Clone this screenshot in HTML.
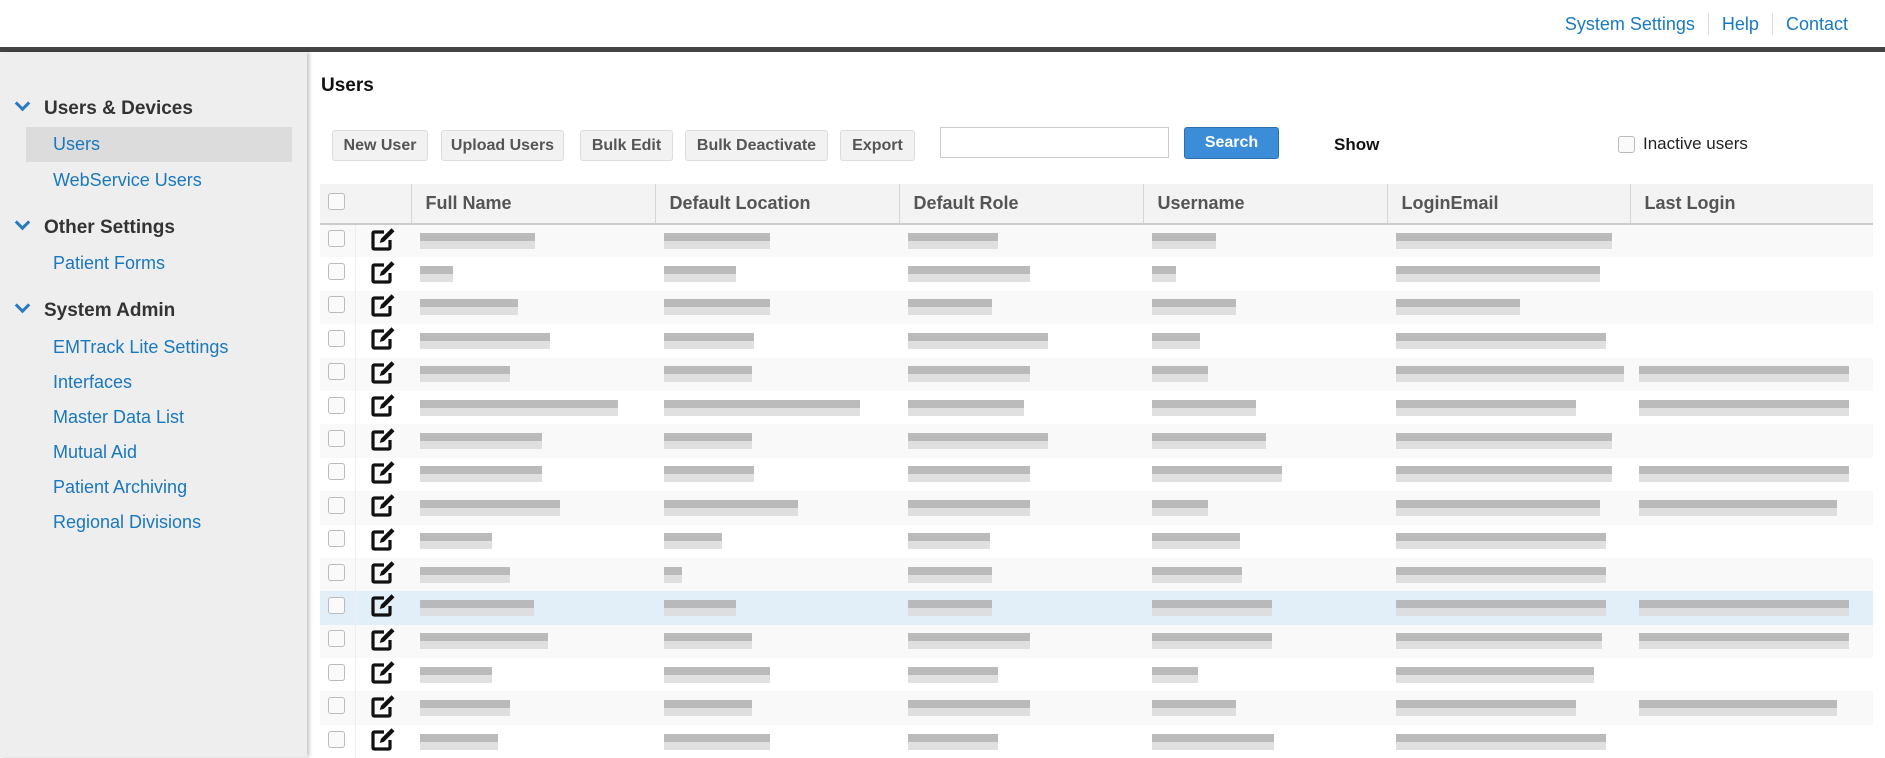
<!DOCTYPE html>
<html><head><meta charset="utf-8"><style>
*{box-sizing:border-box;margin:0;padding:0}
body{width:1885px;height:757px;overflow:hidden;font-family:"Liberation Sans",sans-serif;background:#fff;position:relative}
.top{position:absolute;top:0;left:0;width:1885px;height:48px;background:#fff}
.toplinks{position:absolute;top:13px;right:24px;font-size:18px;color:#1a7ac0;display:flex}
.toplinks span{padding:0 13px;border-left:1px solid #ddd;line-height:22px}
.toplinks span:first-child{border-left:none}
.bar{position:absolute;top:47px;left:0;width:1885px;height:5px;background:#444}
.side{position:absolute;top:52px;left:0;width:307px;height:705px;background:#eee;box-shadow:2px 0 4px rgba(0,0,0,.25)}
.sh{position:absolute;left:44px;font-size:19px;font-weight:bold;color:#333}
.chev{position:absolute;left:17px;width:11px;height:11px;border-right:3px solid #2a7ac0;border-bottom:3px solid #2a7ac0;transform:rotate(45deg)}
.si{position:absolute;left:53px;font-size:18px;color:#1a78bd}
.hl{position:absolute;left:26px;top:75px;width:266px;height:35px;background:#dcdcdc}
h1{position:absolute;left:321px;top:75px;font-size:19px;font-weight:bold;color:#111}
.btn{position:absolute;top:130px;height:31px;background:#f2f2f2;border:1px solid #ddd;border-radius:3px;font-size:16px;font-weight:bold;color:#555;text-align:center;line-height:29px}
.inp{position:absolute;left:940px;top:127px;width:229px;height:31px;border:1px solid #ccc;background:#fff}
.sbtn{position:absolute;left:1184px;top:127px;width:95px;height:32px;background:#3b8dd8;border:1px solid #2a6fb0;border-radius:3px;color:#fff;font-weight:bold;font-size:16px;text-align:center;line-height:30px}
.show{position:absolute;left:1334px;top:135px;font-size:17px;font-weight:bold;color:#111}
.cb{display:inline-block;width:17px;height:17px;border:1px solid #bbb;border-radius:3px;background:#fafafa}
.inact{position:absolute;left:1618px;top:134px;font-size:17px;color:#222;display:flex;align-items:center;gap:8px}
table{position:absolute;left:320px;top:184px;width:1553px;border-collapse:collapse;table-layout:fixed}
th{height:40px;background:#f3f3f3;text-align:left;font-size:18px;color:#555;font-weight:bold;padding-left:14px;border-left:1px solid #d5d5d5;border-bottom:2px solid #ccc}
th.n{border-left:none;padding-left:8px}
td{height:33.4px;padding-left:9px;vertical-align:middle}
td.c{padding-left:8px;border-right:1px solid #eee}
td.e{padding-left:14px}
tr:nth-child(even) td{background:#f9f9f9}
tr.sel td{background:#e2eef8!important}
.b{display:block;height:16px;background:linear-gradient(#b3b3b3 0 8px,#dcdcdc 8px 16px);opacity:.9}
</style></head><body>
<div class="top"><div class="toplinks"><span>System Settings</span><span>Help</span><span>Contact</span></div></div>
<div class="bar"></div>
<div class="side">
<div class="hl"></div>
<div class="chev" style="top:46px"></div><div class="sh" style="top:46px">Users &amp; Devices</div>
<div class="si" style="top:82px">Users</div>
<div class="si" style="top:118px">WebService Users</div>
<div class="chev" style="top:165px"></div><div class="sh" style="top:165px">Other Settings</div>
<div class="si" style="top:201px">Patient Forms</div>
<div class="chev" style="top:248px"></div><div class="sh" style="top:248px">System Admin</div>
<div class="si" style="top:285px">EMTrack Lite Settings</div>
<div class="si" style="top:320px">Interfaces</div>
<div class="si" style="top:355px">Master Data List</div>
<div class="si" style="top:390px">Mutual Aid</div>
<div class="si" style="top:425px">Patient Archiving</div>
<div class="si" style="top:460px">Regional Divisions</div>
</div>
<h1>Users</h1>
<div class="btn" style="left:332px;width:96px">New User</div>
<div class="btn" style="left:441px;width:123px">Upload Users</div>
<div class="btn" style="left:580px;width:93px">Bulk Edit</div>
<div class="btn" style="left:685px;width:143px">Bulk Deactivate</div>
<div class="btn" style="left:840px;width:75px">Export</div>
<div class="inp"></div>
<div class="sbtn">Search</div>
<div class="show">Show</div>
<div class="inact"><span class="cb"></span>Inactive users</div>
<svg width="0" height="0" style="position:absolute"><defs><symbol id="ed" viewBox="0 0 26 24"><path d="M14 5H4.5Q3 5 3 6.5v14Q3 22 4.5 22h14q1.5 0 1.5-1.5V13" fill="none" stroke="#111" stroke-width="3.2"/><path d="M21.5 1.2l3 3-10.5 10.5-4.3 1.3 1.3-4.3z" fill="#111"/></symbol></defs></svg>
<table>
<colgroup><col style="width:35px"><col style="width:56px"><col style="width:244px"><col style="width:244px"><col style="width:244px"><col style="width:244px"><col style="width:243px"><col style="width:243px"></colgroup>
<tr><th class="n"><span class="cb"></span></th><th style="border-left:none"></th><th>Full Name</th><th>Default Location</th><th>Default Role</th><th>Username</th><th>LoginEmail</th><th>Last Login</th></tr>
<tr><td class="c"><span class="cb"></span></td><td class="e"><svg width="26" height="24"><use href="#ed"/></svg></td><td><i class="b" style="width:115px"></i></td><td><i class="b" style="width:106px"></i></td><td><i class="b" style="width:90px"></i></td><td><i class="b" style="width:64px"></i></td><td><i class="b" style="width:216px"></i></td><td></td></tr>
<tr><td class="c"><span class="cb"></span></td><td class="e"><svg width="26" height="24"><use href="#ed"/></svg></td><td><i class="b" style="width:33px"></i></td><td><i class="b" style="width:72px"></i></td><td><i class="b" style="width:122px"></i></td><td><i class="b" style="width:24px"></i></td><td><i class="b" style="width:204px"></i></td><td></td></tr>
<tr><td class="c"><span class="cb"></span></td><td class="e"><svg width="26" height="24"><use href="#ed"/></svg></td><td><i class="b" style="width:98px"></i></td><td><i class="b" style="width:106px"></i></td><td><i class="b" style="width:84px"></i></td><td><i class="b" style="width:84px"></i></td><td><i class="b" style="width:124px"></i></td><td></td></tr>
<tr><td class="c"><span class="cb"></span></td><td class="e"><svg width="26" height="24"><use href="#ed"/></svg></td><td><i class="b" style="width:130px"></i></td><td><i class="b" style="width:90px"></i></td><td><i class="b" style="width:140px"></i></td><td><i class="b" style="width:48px"></i></td><td><i class="b" style="width:210px"></i></td><td></td></tr>
<tr><td class="c"><span class="cb"></span></td><td class="e"><svg width="26" height="24"><use href="#ed"/></svg></td><td><i class="b" style="width:90px"></i></td><td><i class="b" style="width:88px"></i></td><td><i class="b" style="width:122px"></i></td><td><i class="b" style="width:56px"></i></td><td><i class="b" style="width:228px"></i></td><td><i class="b" style="width:210px"></i></td></tr>
<tr><td class="c"><span class="cb"></span></td><td class="e"><svg width="26" height="24"><use href="#ed"/></svg></td><td><i class="b" style="width:198px"></i></td><td><i class="b" style="width:196px"></i></td><td><i class="b" style="width:116px"></i></td><td><i class="b" style="width:104px"></i></td><td><i class="b" style="width:180px"></i></td><td><i class="b" style="width:210px"></i></td></tr>
<tr><td class="c"><span class="cb"></span></td><td class="e"><svg width="26" height="24"><use href="#ed"/></svg></td><td><i class="b" style="width:122px"></i></td><td><i class="b" style="width:88px"></i></td><td><i class="b" style="width:140px"></i></td><td><i class="b" style="width:114px"></i></td><td><i class="b" style="width:216px"></i></td><td></td></tr>
<tr><td class="c"><span class="cb"></span></td><td class="e"><svg width="26" height="24"><use href="#ed"/></svg></td><td><i class="b" style="width:122px"></i></td><td><i class="b" style="width:90px"></i></td><td><i class="b" style="width:122px"></i></td><td><i class="b" style="width:130px"></i></td><td><i class="b" style="width:216px"></i></td><td><i class="b" style="width:210px"></i></td></tr>
<tr><td class="c"><span class="cb"></span></td><td class="e"><svg width="26" height="24"><use href="#ed"/></svg></td><td><i class="b" style="width:140px"></i></td><td><i class="b" style="width:134px"></i></td><td><i class="b" style="width:122px"></i></td><td><i class="b" style="width:56px"></i></td><td><i class="b" style="width:204px"></i></td><td><i class="b" style="width:198px"></i></td></tr>
<tr><td class="c"><span class="cb"></span></td><td class="e"><svg width="26" height="24"><use href="#ed"/></svg></td><td><i class="b" style="width:72px"></i></td><td><i class="b" style="width:58px"></i></td><td><i class="b" style="width:82px"></i></td><td><i class="b" style="width:88px"></i></td><td><i class="b" style="width:210px"></i></td><td></td></tr>
<tr><td class="c"><span class="cb"></span></td><td class="e"><svg width="26" height="24"><use href="#ed"/></svg></td><td><i class="b" style="width:90px"></i></td><td><i class="b" style="width:18px"></i></td><td><i class="b" style="width:84px"></i></td><td><i class="b" style="width:90px"></i></td><td><i class="b" style="width:210px"></i></td><td></td></tr>
<tr class="sel"><td class="c"><span class="cb"></span></td><td class="e"><svg width="26" height="24"><use href="#ed"/></svg></td><td><i class="b" style="width:114px"></i></td><td><i class="b" style="width:72px"></i></td><td><i class="b" style="width:84px"></i></td><td><i class="b" style="width:120px"></i></td><td><i class="b" style="width:210px"></i></td><td><i class="b" style="width:210px"></i></td></tr>
<tr><td class="c"><span class="cb"></span></td><td class="e"><svg width="26" height="24"><use href="#ed"/></svg></td><td><i class="b" style="width:128px"></i></td><td><i class="b" style="width:88px"></i></td><td><i class="b" style="width:122px"></i></td><td><i class="b" style="width:120px"></i></td><td><i class="b" style="width:206px"></i></td><td><i class="b" style="width:210px"></i></td></tr>
<tr><td class="c"><span class="cb"></span></td><td class="e"><svg width="26" height="24"><use href="#ed"/></svg></td><td><i class="b" style="width:72px"></i></td><td><i class="b" style="width:106px"></i></td><td><i class="b" style="width:90px"></i></td><td><i class="b" style="width:46px"></i></td><td><i class="b" style="width:198px"></i></td><td></td></tr>
<tr><td class="c"><span class="cb"></span></td><td class="e"><svg width="26" height="24"><use href="#ed"/></svg></td><td><i class="b" style="width:90px"></i></td><td><i class="b" style="width:88px"></i></td><td><i class="b" style="width:122px"></i></td><td><i class="b" style="width:84px"></i></td><td><i class="b" style="width:180px"></i></td><td><i class="b" style="width:198px"></i></td></tr>
<tr><td class="c"><span class="cb"></span></td><td class="e"><svg width="26" height="24"><use href="#ed"/></svg></td><td><i class="b" style="width:78px"></i></td><td><i class="b" style="width:106px"></i></td><td><i class="b" style="width:90px"></i></td><td><i class="b" style="width:122px"></i></td><td><i class="b" style="width:210px"></i></td><td></td></tr>
</table>
</body></html>
